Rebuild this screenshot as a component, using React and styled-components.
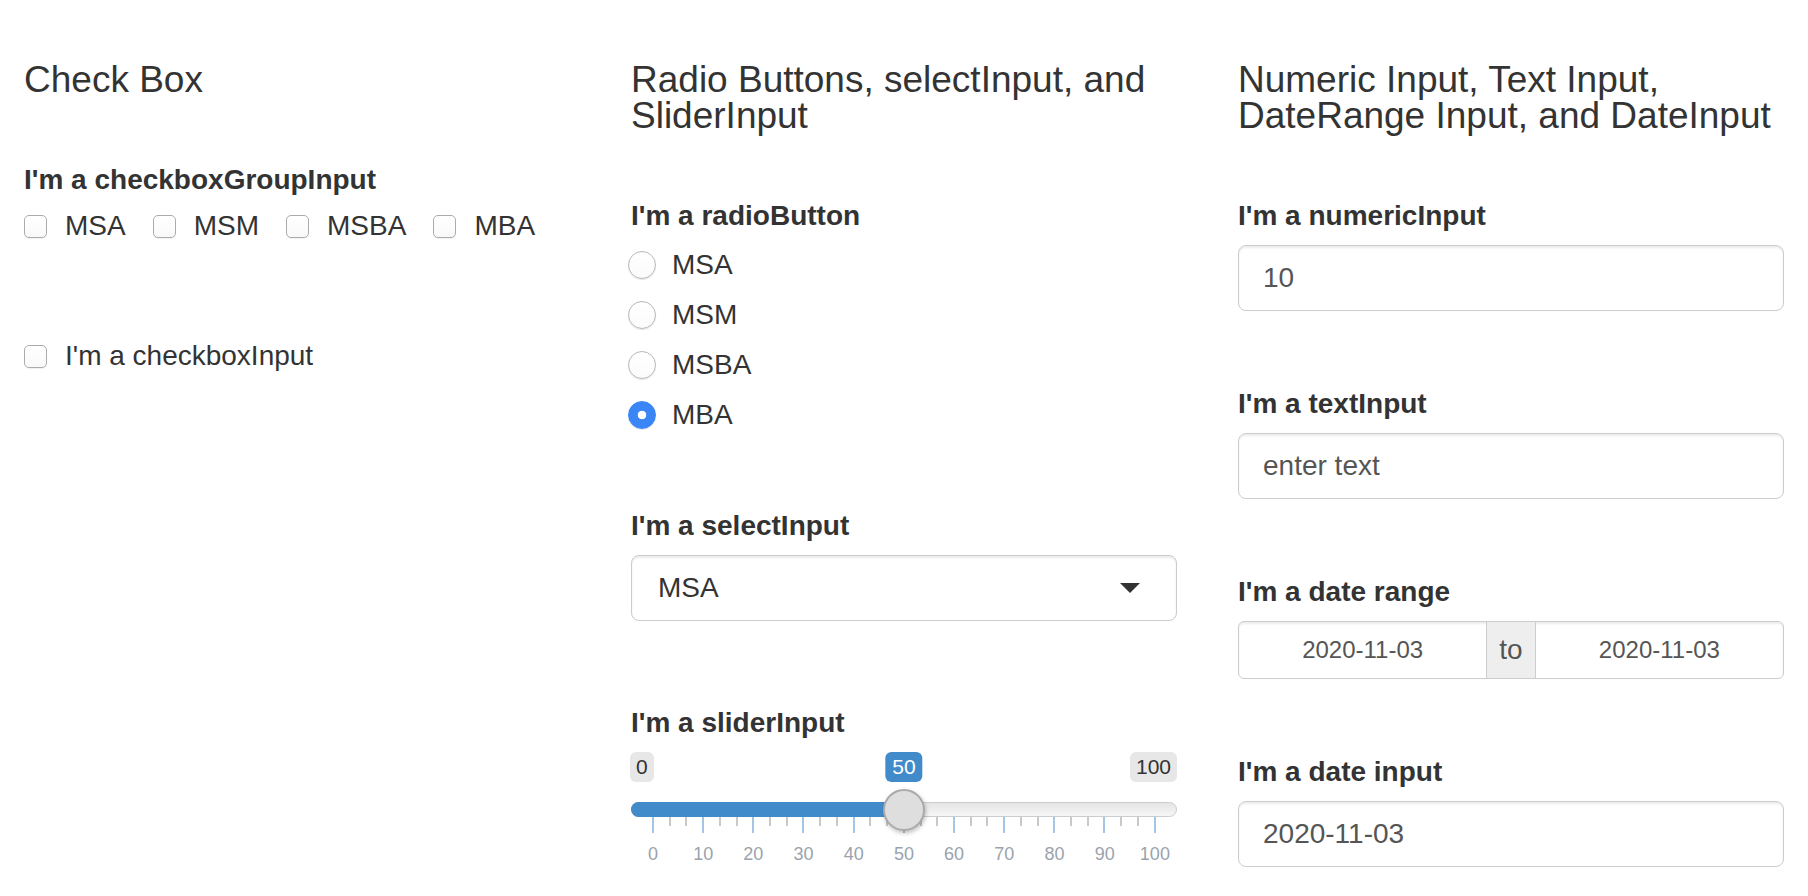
import React from 'react';
import styled, { createGlobalStyle } from 'styled-components';

const GlobalStyle = createGlobalStyle`
  body {
    margin: 0;
    background: #fff;
    font-family: "Liberation Sans", Arial, sans-serif;
    color: #333;
  }
`;

const Page = styled.div`
  display: grid;
  grid-template-columns: repeat(3, 1fr);
  column-gap: 61px;
  padding: 62px 24px 0;
`;

const Column = styled.div`
  min-width: 0;
`;

const Heading = styled.h4`
  margin: 0 0 62px;
  font-size: 37px;
  line-height: 36px;
  font-weight: 400;
  color: #333;
`;

const Group = styled.div`
  margin-top: ${(p) => p.$top || 0}px;
`;

const Label = styled.label`
  display: block;
  font-size: 28px;
  line-height: 40px;
  font-weight: 700;
  margin-bottom: ${(p) => (p.$gap === undefined ? 9 : p.$gap)}px;
`;

/* check boxes */
const CheckRow = styled.div`
  display: flex;
  gap: 27px;
`;

const CheckItem = styled.div`
  display: flex;
  align-items: center;
  gap: 18px;
  height: 40px;
  font-size: 28px;
`;

const Box = styled.span`
  width: 23px;
  height: 23px;
  box-sizing: border-box;
  border: 1px solid #ababab;
  border-radius: 5px;
  background: linear-gradient(to bottom, #fff, #f9f9f9);
  box-shadow: 0 1px 1px rgba(0, 0, 0, 0.06);
`;

/* radio buttons */
const RadioList = styled.div`
  display: flex;
  flex-direction: column;
  gap: 10px;
`;

const RadioItem = styled.div`
  display: flex;
  align-items: center;
  gap: 16px;
  height: 40px;
  font-size: 28px;
  margin-left: -3px;
`;

const Radio = styled.span`
  width: 28px;
  height: 28px;
  box-sizing: border-box;
  border-radius: 50%;
  border: 1px solid ${(p) => (p.$on ? '#3a86f6' : '#b8b8b8')};
  background: ${(p) =>
    p.$on
      ? 'radial-gradient(circle, #fff 0 4px, #3a86f6 4.6px)'
      : 'linear-gradient(to bottom, #fff, #fbfbfb)'};
  box-shadow: 0 1px 1px rgba(0, 0, 0, 0.1);
`;

/* inputs */
const Field = styled.input`
  display: block;
  width: 100%;
  height: 66px;
  box-sizing: border-box;
  padding: 0 24px;
  border: 1px solid #ccc;
  border-radius: 8px;
  box-shadow: inset 0 2px 2px rgba(0, 0, 0, 0.075);
  font-family: inherit;
  font-size: 28px;
  color: #555;
  background: #fff;
  outline: none;
`;

const Select = styled.div`
  display: flex;
  align-items: center;
  justify-content: space-between;
  height: 66px;
  box-sizing: border-box;
  padding: 0 36px 0 26px;
  border: 1px solid #ccc;
  border-radius: 8px;
  box-shadow: inset 0 2px 2px rgba(0, 0, 0, 0.075);
  font-size: 28px;
  color: #333;
`;

const Caret = styled.span`
  width: 0;
  height: 0;
  border-left: 10px solid transparent;
  border-right: 10px solid transparent;
  border-top: 10px solid #333;
`;

const RangeBox = styled.div`
  display: flex;
  height: 58px;
  box-sizing: border-box;
  border: 1px solid #ccc;
  border-radius: 6px;
  overflow: hidden;
  box-shadow: inset 0 2px 2px rgba(0, 0, 0, 0.075);
`;

const RangeField = styled.input`
  flex: 1;
  min-width: 0;
  border: none;
  background: transparent;
  text-align: center;
  font-family: inherit;
  font-size: 24px;
  color: #555;
  outline: none;
`;

const Addon = styled.span`
  display: flex;
  align-items: center;
  padding: 0 12px;
  background: #eee;
  border-left: 1px solid #ccc;
  border-right: 1px solid #ccc;
  font-size: 28px;
  color: #555;
`;

/* slider */
const Slider = styled.div`
  position: relative;
  height: 114px;
`;

const BadgeRow = styled.div`
  display: flex;
  justify-content: space-between;
  height: 30px;
  margin-left: -1px;
`;

const Badge = styled.span`
  height: 30px;
  line-height: 30px;
  padding: 0 6px;
  border-radius: 6px;
  font-size: 21px;
  background: ${(p) => (p.$value ? '#428bca' : '#e7e7e7')};
  color: ${(p) => (p.$value ? '#fff' : '#333')};
`;

const ValueBadge = styled(Badge)`
  position: absolute;
  top: 0;
  padding: 0 7px;
  transform: translateX(-50%);
`;

const Track = styled.div`
  position: relative;
  margin-top: 20px;
  height: 15px;
  box-sizing: border-box;
  border: 1px solid #ccc;
  border-radius: 8px;
  background: linear-gradient(to bottom, #dcdcdc -50%, #fff 150%);
`;

const Fill = styled.div`
  position: absolute;
  left: -1px;
  top: -1px;
  bottom: -1px;
  background: #428bca;
  border-radius: 8px 0 0 8px;
`;

const Handle = styled.span`
  position: absolute;
  top: 50%;
  width: 42px;
  height: 42px;
  box-sizing: border-box;
  border-radius: 50%;
  border: 2px solid #aaa;
  background: #dedede;
  box-shadow: 1px 2px 4px rgba(0, 0, 0, 0.25);
  transform: translate(-50%, -50%);
`;

const TickRow = styled.div`
  display: flex;
  justify-content: space-between;
  align-items: flex-start;
  height: 16px;
  margin: 0 21px;
`;

const Tick = styled.span`
  width: 2px;
  height: ${(p) => (p.$major ? 16 : 9)}px;
  background: ${(p) => (p.$major ? '#a4c6e6' : '#c9c9c9')};
`;

const TickLabels = styled.div`
  display: flex;
  justify-content: space-between;
  margin: 11px 22px 0;
  line-height: 20px;
  font-size: 18px;
  color: #9aa3ad;
`;

const TickLabel = styled.span`
  display: flex;
  justify-content: center;
  width: 0;
  white-space: nowrap;
`;

const CheckOption = ({ children }) => (
  <CheckItem>
    <Box />
    <span>{children}</span>
  </CheckItem>
);

const SliderInput = ({ min, max, value }) => {
  const inset = 22;
  const span = 502;
  const pos = inset + ((value - min) / (max - min)) * span;
  const ticks = Array.from({ length: 31 }, (_, i) => i % 3 === 0);
  const labels = Array.from({ length: 11 }, (_, i) => min + i * 10);
  return (
    <Slider>
      <BadgeRow>
        <Badge>{min}</Badge>
        <Badge>{max}</Badge>
      </BadgeRow>
      <ValueBadge $value style={{ left: pos }}>{value}</ValueBadge>
      <Track>
        <Fill style={{ width: pos + 1 }} />
        <Handle style={{ left: pos - 1 }} />
      </Track>
      <TickRow>
        {ticks.map((major, i) => (
          <Tick key={i} $major={major} />
        ))}
      </TickRow>
      <TickLabels>
        {labels.map((l) => (
          <TickLabel key={l}>{l}</TickLabel>
        ))}
      </TickLabels>
    </Slider>
  );
};

const App = () => {
  const programs = ['MSA', 'MSM', 'MSBA', 'MBA'];
  return (
    <>
      <GlobalStyle />
      <Page>
        <Column>
          <Heading>Check Box</Heading>
          <Label $gap={6}>I'm a checkboxGroupInput</Label>
          <CheckRow>
            {programs.map((p) => (
              <CheckOption key={p}>{p}</CheckOption>
            ))}
          </CheckRow>
          <Group $top={90}>
            <CheckOption>I'm a checkboxInput</CheckOption>
          </Group>
        </Column>

        <Column>
          <Heading>Radio Buttons, selectInput, and SliderInput</Heading>
          <Label>I'm a radioButton</Label>
          <RadioList>
            {programs.map((p) => (
              <RadioItem key={p}>
                <Radio $on={p === 'MBA'} />
                <span>{p}</span>
              </RadioItem>
            ))}
          </RadioList>
          <Group $top={71}>
            <Label>I'm a selectInput</Label>
            <Select>
              <span>MSA</span>
              <Caret />
            </Select>
          </Group>
          <Group $top={82}>
            <Label>I'm a sliderInput</Label>
            <SliderInput min={0} max={100} value={50} />
          </Group>
        </Column>

        <Column>
          <Heading>Numeric Input, Text Input, DateRange Input, and DateInput</Heading>
          <Label>I'm a numericInput</Label>
          <Field readOnly value="10" />
          <Group $top={73}>
            <Label>I'm a textInput</Label>
            <Field readOnly value="enter text" />
          </Group>
          <Group $top={73}>
            <Label>I'm a date range</Label>
            <RangeBox>
              <RangeField readOnly value="2020-11-03" />
              <Addon>to</Addon>
              <RangeField readOnly value="2020-11-03" />
            </RangeBox>
          </Group>
          <Group $top={73}>
            <Label>I'm a date input</Label>
            <Field readOnly value="2020-11-03" />
          </Group>
        </Column>
      </Page>
    </>
  );
};

export default App;
